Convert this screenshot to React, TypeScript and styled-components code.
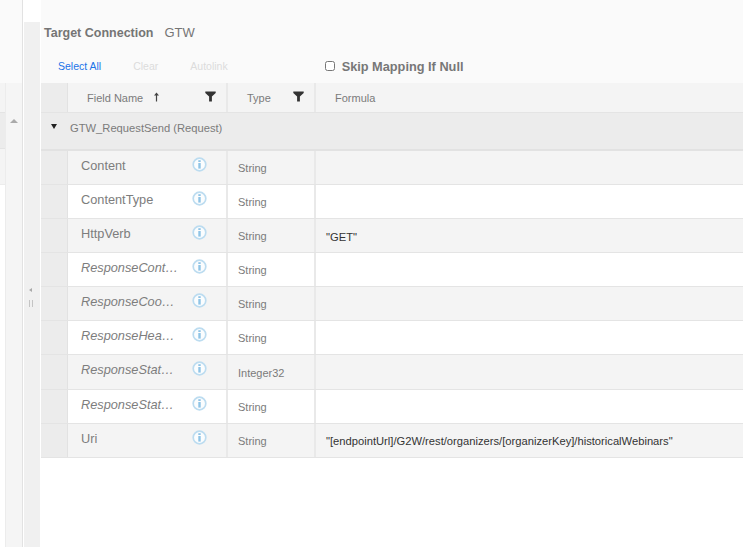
import React from 'react';
import styled, { createGlobalStyle } from 'styled-components';

interface Field {
  name: string;
  type: string;
  formula?: string;
  optional?: boolean;
}

const fields: Field[] = [
  { name: 'Content', type: 'String' },
  { name: 'ContentType', type: 'String' },
  { name: 'HttpVerb', type: 'String', formula: '"GET"' },
  { name: 'ResponseContent', type: 'String', optional: true },
  { name: 'ResponseCookies', type: 'String', optional: true },
  { name: 'ResponseHeaders', type: 'String', optional: true },
  { name: 'ResponseStatusCode', type: 'Integer32', optional: true },
  { name: 'ResponseStatusText', type: 'String', optional: true },
  {
    name: 'Uri',
    type: 'String',
    formula: '"[endpointUrl]/G2W/rest/organizers/[organizerKey]/historicalWebinars"',
  },
];

const GlobalStyle = createGlobalStyle`
  html, body {
    margin: 0;
    padding: 0;
    background: #fff;
  }
  * {
    box-sizing: border-box;
  }
`;

const Page = styled.div`
  display: flex;
  width: 743px;
  height: 547px;
  overflow: hidden;
  background: #fff;
  font-family: "Liberation Sans", Arial, sans-serif;
`;

const LeftPane = styled.div`
  display: flex;
  flex-direction: column;
  flex: 0 0 23px;
  border-right: 1px solid #e2e2e2;
`;

const LeftTop = styled.div`
  flex: 0 0 83px;
  background: #fafafa;
`;

const LeftBody = styled.div`
  display: flex;
  flex: 1;
`;

const LeftCells = styled.div`
  flex: 0 0 5px;
  display: flex;
  flex-direction: column;
`;

const LeftHeadCell = styled.div`
  height: 30px;
  background: #f4f4f4;
  border-bottom: 1px solid #e4e4e4;
`;

const LeftGroupCell = styled.div`
  height: 36px;
  background: #ececec;
  border-bottom: 1px solid #e4e4e4;
`;

const LeftRowCell = styled.div`
  height: 36px;
  background: #f4f4f4;
  border-bottom: 1px solid #ececec;
`;

const ScrollTrack = styled.div`
  flex: 1;
  display: flex;
  justify-content: center;
  padding-top: 36px;
  background: #f5f5f5;
  border-left: 1px solid #ececec;
`;

const ScrollUp = styled.div`
  width: 0;
  height: 0;
  border-left: 4px solid transparent;
  border-right: 4px solid transparent;
  border-bottom: 4px solid #aaa;
`;

const Splitter = styled.div`
  flex: 0 0 16px;
  margin-top: 22px;
  margin-left: 1px;
  display: flex;
  flex-direction: column;
  align-items: center;
  padding: 266px 3px 0 0;
  background: #f0f0f0;
`;

const CollapseArrow = styled.div`
  width: 0;
  height: 0;
  border-top: 2px solid transparent;
  border-bottom: 2px solid transparent;
  border-right: 3px solid #aaa;
`;

const Grip = styled.div`
  width: 4px;
  height: 7px;
  margin-top: 8px;
  border-left: 1px solid #c4c4c4;
  border-right: 1px solid #c4c4c4;
`;

const RightPane = styled.div`
  flex: 1;
  min-width: 0;
  margin-left: 1px;
`;

const Toolbar = styled.div`
  height: 83px;
  padding-top: 22px;
  background: #fafafa;
`;

const TitleRow = styled.div`
  display: flex;
  align-items: center;
  gap: 11px;
  height: 21px;
  padding-left: 3px;
  color: #757575;
`;

const TitleLabel = styled.span`
  font-size: 12.5px;
  font-weight: bold;
`;

const TitleValue = styled.span`
  font-size: 13px;
`;

const ActionRow = styled.div`
  display: flex;
  align-items: center;
  height: 20px;
  margin-top: 13px;
  padding-left: 17px;
`;

const ActionLink = styled.a<{ $disabled?: boolean }>`
  margin-right: 32px;
  font-size: 10.5px;
  color: ${p => (p.$disabled ? '#dcdcdc' : '#1a73e8')};
`;

const SkipLabel = styled.label`
  display: flex;
  align-items: center;
  margin-left: 65px;
  font-size: 12.75px;
  font-weight: bold;
  color: #777;
`;

const SkipCheck = styled.input`
  width: 10px;
  height: 10px;
  margin: 0 7px 0 0;
`;

const Row = styled.div<{ $height: string; $bg: string }>`
  display: grid;
  grid-template-columns: 27px 160px 88px 1fr;
  height: ${p => p.$height};
  background: ${p => p.$bg};
  border-bottom: 1px solid #e4e4e4;
`;

const SelectCell = styled.div`
  background: #ececec;
  border-right: 1px solid #e2e2e2;
`;

const HeadCell = styled.div`
  display: flex;
  align-items: center;
  padding-left: 19px;
  border-right: 2px solid #e9e9e9;
  font-size: 11px;
  color: #7b7b7b;
  &:last-child {
    border-right: 0;
  }
`;

const SortIcon = styled.svg`
  width: 7px;
  height: 10px;
  margin: -2px 0 0 10px;
`;

const FilterIcon = styled.svg<{ $left: number }>`
  width: 11px;
  height: 11px;
  margin: -2px 0 0 ${p => p.$left}px;
`;

const GroupRow = styled.div`
  display: flex;
  align-items: center;
  height: 38px;
  padding: 0 0 6px 10px;
  background: #ececec;
  border-bottom: 2px solid #e2e2e2;
  font-size: 11.2px;
  color: #7b7b7b;
`;

const GroupToggle = styled.div`
  width: 0;
  height: 0;
  margin: -3px 13px 0 0;
  border-left: 3px solid transparent;
  border-right: 3px solid transparent;
  border-top: 5px solid #222;
`;

const NameCell = styled.div`
  display: flex;
  align-items: flex-start;
  padding: 7px 0 0 13px;
  border-right: 2px solid #e9e9e9;
`;

const NameText = styled.div<{ $optional?: boolean }>`
  width: 98px;
  overflow: hidden;
  white-space: nowrap;
  text-overflow: ellipsis;
  font-size: 12.75px;
  line-height: 16px;
  font-style: ${p => (p.$optional ? 'italic' : 'normal')};
  color: #7d7d7d;
`;

const InfoIcon = styled.svg`
  flex: none;
  width: 15px;
  height: 15px;
  margin: -1px 0 0 13px;
`;

const TypeCell = styled.div`
  display: flex;
  align-items: center;
  padding: 1px 0 0 10px;
  border-right: 2px solid #e9e9e9;
  font-size: 11px;
  color: #7b7b7b;
`;

const FormulaCell = styled.div`
  display: flex;
  align-items: center;
  padding: 2px 0 0 10px;
  font-size: 11.2px;
  color: #333;
`;

const Filter = ({ left }: { left: number }) => (
  <FilterIcon $left={left} viewBox="0 0 11 11">
    <path d="M0.3 0.5h10.4v1.6L6.9 5.6V10.5H4.1V5.6L0.3 2.1z" fill="#333" />
  </FilterIcon>
);

const Info = () => (
  <InfoIcon viewBox="0 0 15 15">
    <circle cx="7.5" cy="7.5" r="6.3" fill="#fbfdfe" stroke="#bcdcf0" strokeWidth="1.7" />
    <rect x="6.3" y="6" width="2.4" height="5.6" fill="#8fc4e6" />
    <rect x="6.3" y="3.2" width="2.4" height="1.8" fill="#8fc4e6" />
  </InfoIcon>
);

const App: React.FC = () => (
  <Page>
    <GlobalStyle />
    <LeftPane>
      <LeftTop />
      <LeftBody>
        <LeftCells>
          <LeftHeadCell />
          <LeftGroupCell />
          <LeftRowCell />
        </LeftCells>
        <ScrollTrack>
          <ScrollUp />
        </ScrollTrack>
      </LeftBody>
    </LeftPane>
    <Splitter>
      <CollapseArrow />
      <Grip />
    </Splitter>
    <RightPane>
      <Toolbar>
        <TitleRow>
          <TitleLabel>Target Connection</TitleLabel>
          <TitleValue>GTW</TitleValue>
        </TitleRow>
        <ActionRow>
          <ActionLink>Select All</ActionLink>
          <ActionLink $disabled>Clear</ActionLink>
          <ActionLink $disabled>Autolink</ActionLink>
          <SkipLabel>
            <SkipCheck type="checkbox" readOnly />
            Skip Mapping If Null
          </SkipLabel>
        </ActionRow>
      </Toolbar>
      <Row $height="30px" $bg="#f4f4f4">
        <SelectCell />
        <HeadCell>
          Field Name
          <SortIcon viewBox="0 0 7 10">
            <path d="M3.5 0.5L6 3.5H4.1V9.5H2.9V3.5H1z" fill="#444" />
          </SortIcon>
          <Filter left={45} />
        </HeadCell>
        <HeadCell>
          Type
          <Filter left={22} />
        </HeadCell>
        <HeadCell>Formula</HeadCell>
      </Row>
      <GroupRow>
        <GroupToggle />
        GTW_RequestSend (Request)
      </GroupRow>
      {fields.map((f, i) => (
        <Row key={f.name} $height="34.08px" $bg={i % 2 === 0 ? '#f4f4f4' : '#fff'}>
          <SelectCell />
          <NameCell>
            <NameText $optional={f.optional}>{f.name}</NameText>
            <Info />
          </NameCell>
          <TypeCell>{f.type}</TypeCell>
          <FormulaCell>{f.formula}</FormulaCell>
        </Row>
      ))}
    </RightPane>
  </Page>
);

export default App;
